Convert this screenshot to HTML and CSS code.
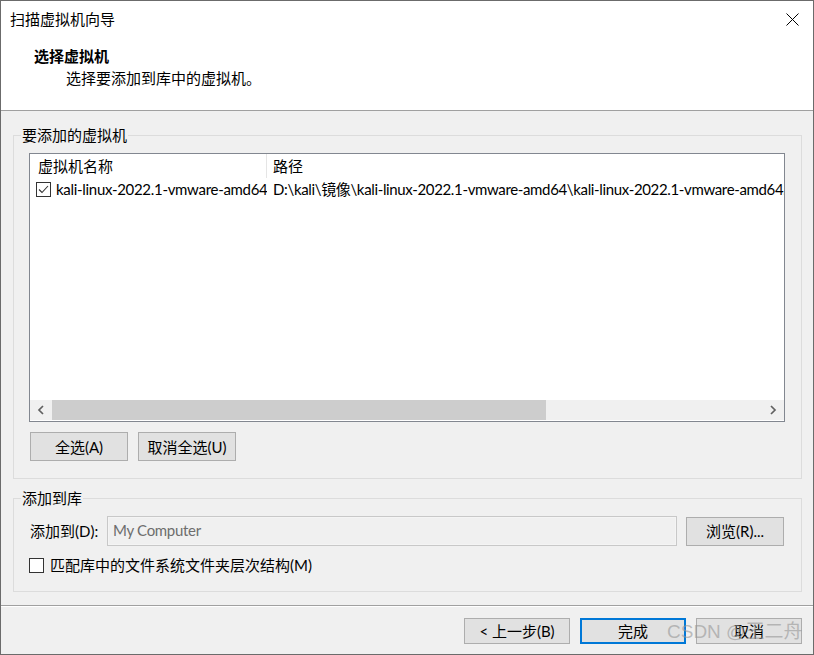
FILE: index.html
```html
<!DOCTYPE html>
<html lang="zh-CN">
<head>
<meta charset="utf-8">
<title>扫描虚拟机向导</title>
<link rel="stylesheet" href="styles.css">
</head>
<body>
<div class="window">
  <div class="top">
    <div class="titlebar">
      <span class="title">扫描虚拟机向导</span>
      <svg class="close" width="13" height="13" viewBox="0 0 13 13"><path d="M0.5 0.5L12.5 12.5M12.5 0.5L0.5 12.5" stroke="#000" stroke-width="1" fill="none"/></svg>
    </div>
    <div class="hdr">
      <div class="hdr-title">选择虚拟机</div>
      <div class="hdr-sub">选择要添加到库中的虚拟机。</div>
    </div>
  </div>
  <div class="content">
    <div class="group group-vms">
      <div class="group-label">要添加的虚拟机</div>
      <div class="list">
        <div class="list-head">
          <div class="col col-name">虚拟机名称</div>
          <div class="col col-path">路径</div>
        </div>
        <div class="list-body">
          <div class="row">
            <div class="col col-name">
              <span class="chk chk-on"><svg width="13" height="13" viewBox="0 0 13 13"><path d="M2 6.5L5 9.5L11 3" stroke="#333" stroke-width="1.1" fill="none"/></svg></span>
              <span class="cell-text">kali-linux-2022.1-vmware-amd64</span>
            </div>
            <div class="col col-path"><span class="cell-text path-text">D:\kali\镜像\kali-linux-2022.1-vmware-amd64\kali-linux-2022.1-vmware-amd64.vmx</span></div>
          </div>
        </div>
        <div class="hscroll">
          <div class="sb-btn"><svg width="8" height="10" viewBox="0 0 8 10"><path d="M6 1L2 5L6 9" stroke="#606060" stroke-width="1.7" fill="none"/></svg></div>
          <div class="sb-track"><div class="sb-thumb"></div></div>
          <div class="sb-btn"><svg width="8" height="10" viewBox="0 0 8 10"><path d="M2 1L6 5L2 9" stroke="#606060" stroke-width="1.7" fill="none"/></svg></div>
        </div>
      </div>
      <div class="btn-row">
        <button class="btn btn-select">全选(A)</button>
        <button class="btn btn-select">取消全选(U)</button>
      </div>
    </div>
    <div class="group group-lib">
      <div class="group-label">添加到库</div>
      <div class="field-row">
        <span class="field-label">添加到(D):</span>
        <div class="input">My Computer</div>
        <button class="btn btn-browse">浏览(R)...</button>
      </div>
      <div class="check-row">
        <span class="chk"></span>
        <span class="check-text">匹配库中的文件系统文件夹层次结构(M)</span>
      </div>
    </div>
  </div>
  <div class="footer">
    <button class="btn btn-foot">&lt; 上一步(B)</button>
    <button class="btn btn-foot btn-default">完成</button>
    <button class="btn btn-foot">取消</button>
  </div>
  <div class="watermark">CSDN @王二舟</div>
</div>
</body>
</html>
```
FILE: styles.css
```css
* { box-sizing: border-box; }
html, body { margin: 0; padding: 0; }
body {
  width: 814px;
  height: 655px;
  overflow: hidden;
  font-family: "Lato", "Noto Sans CJK SC", sans-serif;
  font-size: 15px;
  line-height: 20px;
  color: #000;
  background: #f0f0f0;
}
.window {
  position: relative;
  width: 814px;
  height: 655px;
  border: 1px solid #6b6b6b;
  background: #f0f0f0;
  display: flex;
  flex-direction: column;
}
.top {
  height: 110px;
  background: #fff;
  border-bottom: 1px solid #a0a0a0;
  flex: none;
}
.titlebar {
  height: 20px;
  margin-top: 8px;
  padding: 0 14px 0 9px;
  display: flex;
  align-items: center;
  justify-content: space-between;
}
.close { display: block; }
.hdr { padding-left: 33px; margin-top: 17px; }
.hdr-title { font-weight: bold; }
.hdr-sub { margin-top: 2px; padding-left: 32px; }

.content {
  padding: 24px 11px 13px 12px;
  flex: none;
}
.group {
  position: relative;
  border: 1px solid #dcdcdc;
}
.group-label {
  position: absolute;
  top: -11px;
  left: 7px;
  padding: 0 1px;
  background: #f0f0f0;
}
.group-vms { padding: 17px 16px 17px 15px; }
.group-lib { margin-top: 19px; padding: 17px 16px 18px 15px; }

.list {
  height: 269px;
  border: 1px solid #828790;
  background: #fff;
  display: flex;
  flex-direction: column;
  overflow: hidden;
}
.list-head {
  height: 24px;
  display: flex;
  align-items: center;
  flex: none;
}
.col { white-space: nowrap; overflow: hidden; }
.col-name { width: 237px; flex: none; }
.col-path { flex: 1; min-width: 0; }
.list-head .col-name { padding-left: 8px; border-right: 1px solid #e5e5e5; height: 24px; line-height: 24px; }
.list-head .col-path { padding-left: 6px; line-height: 24px; }
.list-body { flex: 1; }
.row { height: 22px; display: flex; align-items: center; }
.row .col-name { padding-left: 6px; display: flex; align-items: center; gap: 5px; }
.row .col-path { padding-left: 6px; }
.cell-text { white-space: nowrap; letter-spacing: -0.3px; }
.path-text { letter-spacing: -0.35px; }

.chk {
  width: 15px;
  height: 15px;
  border: 1px solid #333;
  background: #fff;
  display: inline-flex;
  align-items: center;
  justify-content: center;
  flex: none;
}
.chk svg { display: block; }

.hscroll {
  height: 20px;
  margin-bottom: 1px;
  background: #f0f0f0;
  display: flex;
  flex: none;
}
.sb-btn {
  width: 22px;
  display: flex;
  align-items: center;
  justify-content: center;
  flex: none;
}
.sb-track { flex: 1; display: flex; }
.sb-thumb { width: 494px; background: #cdcdcd; }

.btn {
  font-family: inherit;
  font-size: 15px;
  line-height: 20px;
  color: #000;
  background: #e1e1e1;
  border: 1px solid #adadad;
  padding: 0;
  margin: 0;
}
.btn-row { margin-top: 10px; padding-left: 1px; display: flex; gap: 10px; }
.btn-select { width: 98px; height: 29px; }

.field-row { display: flex; align-items: center; }
.field-label { width: 78px; padding-left: 1px; flex: none; }
.input {
  width: 570px;
  height: 30px;
  border: 1px solid #c8c8c8;
  box-shadow: inset 0 0 0 1px #f4f4f4;
  background: #f0f0f0;
  color: #6d6d6d;
  padding-left: 5px;
  line-height: 27px;
  letter-spacing: -0.3px;
  flex: none;
}
.btn-browse { width: 98px; height: 29px; margin-left: 9px; }
.check-row { margin-top: 11px; height: 16px; display: flex; align-items: center; gap: 6px; }
.check-row .chk { width: 15px; height: 15px; }

.footer {
  flex: 1;
  border-top: 1px solid #a0a0a0;
  box-shadow: inset 0 1px 0 #fff;
  padding: 12px 11px 0 0;
  display: flex;
  justify-content: flex-end;
  align-items: flex-start;
  gap: 10px;
}
.btn-foot { width: 106px; height: 26px; }
.btn-default { border: 2px solid #0078d7; }

.watermark {
  position: absolute;
  left: 666px;
  top: 618px;
  font-family: "Liberation Sans", "Noto Sans CJK SC", sans-serif;
  font-size: 19px;
  line-height: 26px;
  color: rgba(150, 150, 150, 0.6);
  white-space: nowrap;
  pointer-events: none;
}
```
